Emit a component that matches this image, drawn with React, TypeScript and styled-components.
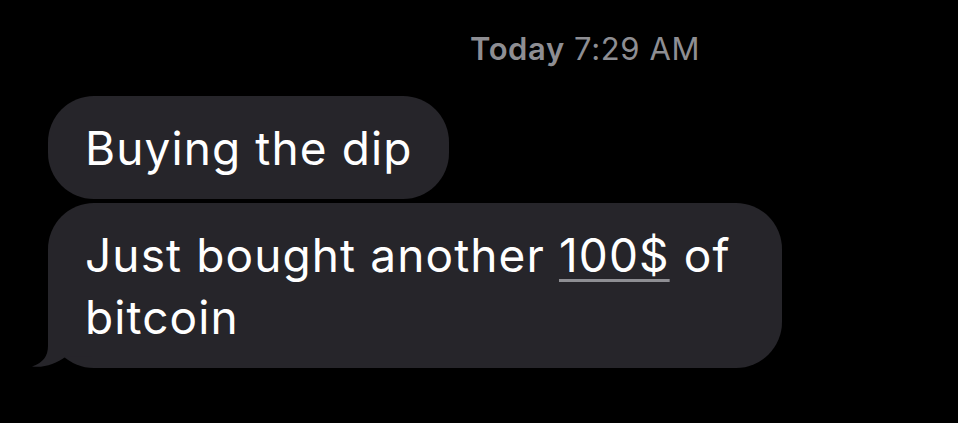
import React from "react";
import styled, { createGlobalStyle } from "styled-components";

const GlobalStyle = createGlobalStyle`
  html, body {
    margin: 0;
    padding: 0;
    background: #000;
  }
  body {
    font-family: Inter, "Noto Sans", "Liberation Sans", sans-serif;
    -webkit-font-smoothing: antialiased;
  }
`;

const Thread = styled.div`
  display: flex;
  flex-direction: column;
  align-items: flex-start;
  padding: 30px 0 0 48px;
  height: 423px;
  box-sizing: border-box;
  background: #000;
`;

const Timestamp = styled.div`
  margin-left: 422px;
  font-size: 31px;
  line-height: 38px;
  color: #8e8e93;
  letter-spacing: 0.6px;

  b {
    font-weight: 600;
  }
`;

const Group = styled.div`
  display: flex;
  flex-direction: column;
  align-items: flex-start;
  gap: 4px;
  margin-top: 28px;
`;

const Bubble = styled.div<{ $wide?: boolean }>`
  position: relative;
  z-index: 0;
  box-sizing: border-box;
  max-width: 734px;
  padding: 21px 36px 20px 37px;
  border-radius: 46px;
  background: #26252a;
  color: #fff;
  font-size: 46px;
  line-height: 62px;
  letter-spacing: 1.1px;
  ${(p) => (p.$wide ? "width: 734px;" : "")}
`;

const Link = styled.span`
  text-decoration: underline;
  text-decoration-color: #8e8e93;
  text-decoration-thickness: 3px;
  text-underline-offset: 7px;
`;

const Tail = styled.svg`
  position: absolute;
  z-index: -1;
  left: -16px;
  bottom: 0;
  width: 60px;
  height: 50px;
`;

function BubbleTail() {
  return (
    <Tail viewBox="0 0 60 50">
      <path
        d="M16 0 L16 28 C16 38 11 45 0 48.5 C12 50 24 46 34 38.5 L60 38.5 L60 0 Z"
        fill="#26252a"
      />
    </Tail>
  );
}

export default function App() {
  return (
    <>
      <GlobalStyle />
      <Thread>
        <Timestamp>
          <b>Today</b> 7:29 AM
        </Timestamp>
        <Group>
          <Bubble>Buying the dip</Bubble>
          <Bubble $wide>
            Just bought another <Link>100$</Link> of bitcoin
            <BubbleTail />
          </Bubble>
        </Group>
      </Thread>
    </>
  );
}
